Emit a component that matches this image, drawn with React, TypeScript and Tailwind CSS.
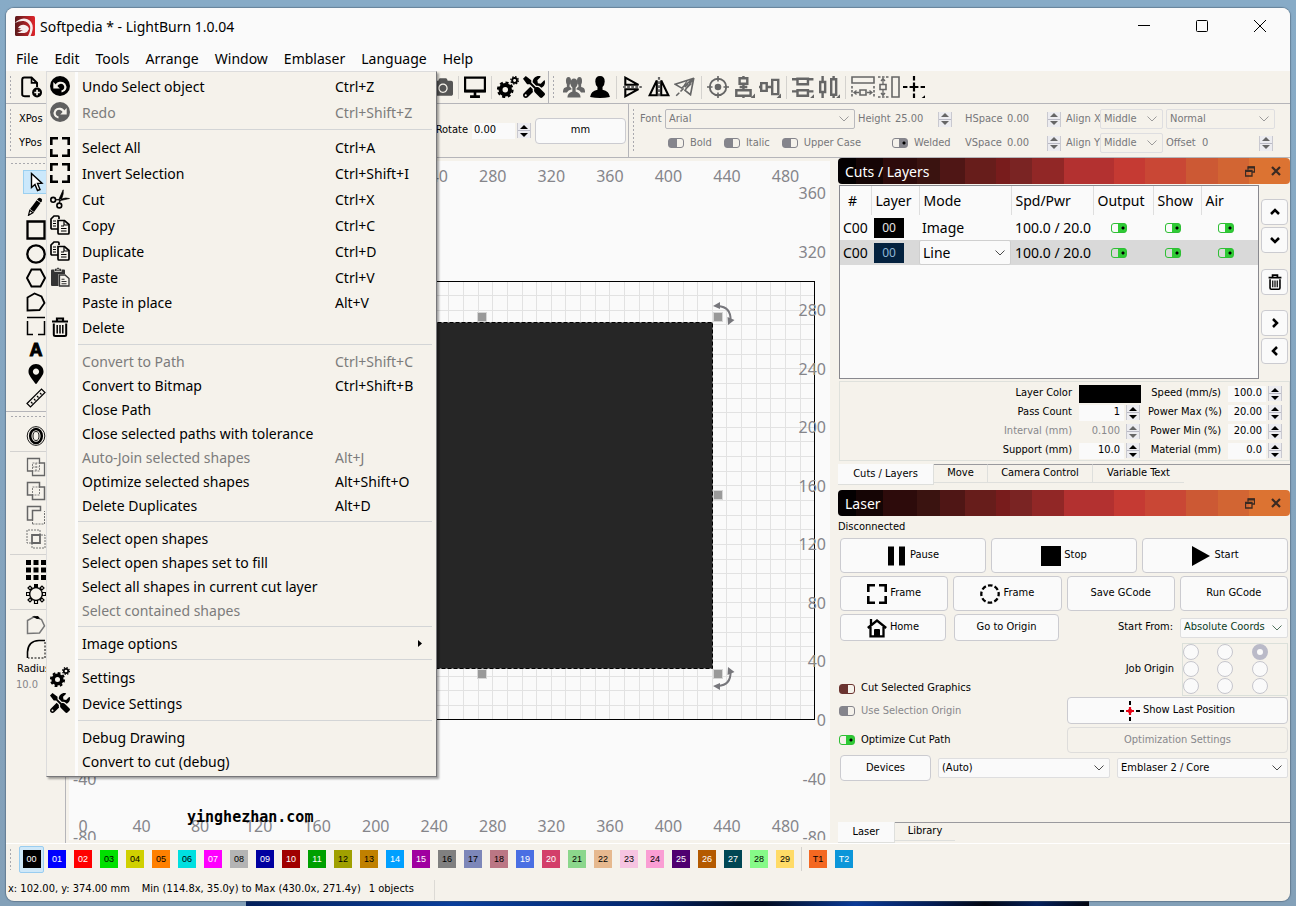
import React from "react";
import { FaCamera, FaMapMarkerAlt, FaTools } from "react-icons/fa";

type Kids = { children?: React.ReactNode };

/* ---------- icons ---------- */

function Icon({ children, size = 20, className = "" }: Kids & { size?: number; className?: string }) {
  return (
    <svg
      width={size}
      height={size}
      viewBox="0 0 20 20"
      fill="none"
      stroke="currentColor"
      strokeWidth="2"
      aria-hidden="true"
      className={`block shrink-0 ${className}`}
    >
      {children}
    </svg>
  );
}

const UndoIcon = ({ className = "" }: { className?: string }) => (
  <Icon className={className}>
    <circle cx="10" cy="10" r="10" fill="currentColor" stroke="none" />
    <path d="M6 10.500C7 6.500 12 5.500 14.500 8.500c2 3 .5 6.500-3 7" stroke="#f5f2eb" strokeWidth="2.200" />
    <path d="M3.300 6v6.500h6.500z" fill="#f5f2eb" stroke="none" />
  </Icon>
);
const RedoIcon = () => <UndoIcon className="-scale-x-100" />;
const MarqueeIcon = () => (
  <Icon>
    <path d="M1.300 8V1.300H8M12 1.300h6.700V8M18.700 12v6.700H12M8 18.700H1.300V12" strokeWidth="2.600" />
  </Icon>
);
const CircleFrameIcon = () => (
  <Icon>
    <circle cx="10" cy="10" r="8.700" strokeWidth="2.300" strokeDasharray="4.600 2.230" strokeDashoffset="2.300" />
  </Icon>
);
const ScissorsIcon = () => (
  <Icon>
    <circle cx="3.200" cy="10.800" r="2.400" strokeWidth="1.600" />
    <circle cx="9.300" cy="16.500" r="2.400" strokeWidth="1.600" />
    <path d="M5.500 10.800l6 .5L19.500 9.500q-4-1-7 .2zM9.300 14l.2-5L13.200 .8q.5 4-1 7.500l-2 4z" fill="currentColor" strokeWidth="0.700" />
  </Icon>
);
const CopyIcon = () => (
  <Icon>
    <path d="M8 14H2Q1 14 1 13V4l3-3h4q1 0 1 1v2M8 16V5.500h6.500l4.500 4V18q0 1-1 1H9q-1 0-1-1z" strokeWidth="1.700" />
    <path d="M3 6h3M3 8.500h3M3 11h3M11 11h3M11 13.500h5.500M11 16h5.500M14 6v4h4" strokeWidth="1.200" />
  </Icon>
);
const PasteIcon = () => (
  <Icon className="text-[#333]">
    <path d="M1 3.500Q1 2.500 2 2.500h2.500V5h7V2.500H14q1 0 1 1V7H8.500v12H2q-1 0-1-1z" fill="currentColor" stroke="none" />
    <path d="M5.500 3.800V2.300h1.500Q8-.3 9 2.300h1.500v1.500z" strokeWidth="1.100" />
    <path d="M9.500 8H15l4 3.500V19H9.500z" strokeWidth="1.300" />
    <path d="M11.500 12.300h3M11.500 14.500h5M11.500 16.700h5" strokeWidth="1.100" />
  </Icon>
);
const TrashIcon = ({ size = 20 }: { size?: number }) => (
  <Icon size={size}>
    <path d="M2 4.500h16M7 4V1.500h6V4" strokeWidth="2.200" />
    <path d="M3.800 6.500v11q0 1.500 1.500 1.500h9.400q1.500 0 1.500-1.500v-11" strokeWidth="2" />
    <path d="M7.200 8v8.500M10 8v8.500M12.800 8v8.500" strokeWidth="1.500" />
  </Icon>
);
const GearsIcon = ({ size = 22 }: { size?: number }) => (
  <Icon size={size}>
    <circle cx="7.500" cy="12.500" r="4.300" strokeWidth="3.600" />
    <circle cx="7.500" cy="12.500" r="6.600" strokeWidth="2" strokeDasharray="2.800 2.384" />
    <circle cx="16" cy="4" r="2.200" strokeWidth="1.700" />
    <circle cx="16" cy="4" r="3.400" strokeWidth="1.200" strokeDasharray="1.400 1.270" />
  </Icon>
);
const NewFileIcon = () => (
  <Icon size={22}>
    <path d="M9 18.500H4.500Q2 18.500 2 16.500V3.500Q2 1.300 4 1.300h6.500l5 5V10" strokeWidth="1.800" />
    <path d="M10.500 1.300v5h5" strokeWidth="1.500" />
    <circle cx="15.500" cy="15" r="4.500" fill="currentColor" stroke="none" />
    <path d="M13 15h5M15.500 12.500v5" stroke="#f5f2eb" strokeWidth="1.500" />
  </Icon>
);
const MonitorIcon = () => (
  <Icon size={22}>
    <path d="M1 1.500h18v12.500H1z" strokeWidth="2" />
    <path d="M1 13.500h18M10 14v4M5.500 18.800h9" strokeWidth="2.400" />
  </Icon>
);
const UsersIcon = () => (
  <Icon size={22} className="text-[#666]">
    <g fill="currentColor" stroke="none">
      <ellipse cx="10" cy="6.500" rx="3.300" ry="4.300" />
      <path d="M4 19.500q0-4 4.500-5.500V10h3v4Q16 15.500 16 19.500z" />
      <ellipse cx="5" cy="4.500" rx="2.300" ry="3.500" />
      <ellipse cx="15" cy="4.500" rx="2.300" ry="3.500" />
      <path d="M0 14q0-3.500 3.500-4V7h2.500v3q1.500.5 2 2-3.500 1-4.500 3H0zM20 14q0-3.500-3.500-4V7h-2.500v3q-1.500.5-2 2 3.500 1 4.500 3H20z" />
    </g>
  </Icon>
);
const PersonIcon = () => (
  <Icon size={22}>
    <path d="M10 0q4.300 0 4.300 5 0 3-2 5v2.500q6.200 1.500 6.700 6.500Q10 21 1 19q.5-5 6.700-6.500V10q-2-2-2-5Q5.700 0 10 0z" fill="currentColor" stroke="none" />
  </Icon>
);
const FlipVIcon = () => (
  <Icon size={22}>
    <path d="M3 1.500V8h12zM3 18.500V12h12z" strokeWidth="1.900" />
    <path d="M1 10h17" strokeWidth="2" strokeDasharray="2.500 1.200" stroke="#666" />
  </Icon>
);
const FlipHIcon = () => (
  <Icon size={22}>
    <path d="M1.500 17.500H8V4zM18.500 17.500H12V4z" strokeWidth="1.900" />
    <path d="M10 1v18" strokeWidth="2" strokeDasharray="2.500 1.200" stroke="#666" />
  </Icon>
);
const MirrorIcon = () => (
  <Icon size={22} className="text-[#666]">
    <path d="M1 7.500L18 2 7 11zM18 2l-3 15-5-4z" strokeWidth="1.500" />
    <path d="M2 18L18 2" strokeWidth="1.400" strokeDasharray="4 1.500" />
    <path d="M12 4.200L9 9M16 7l-4 3.500" strokeWidth="1" />
  </Icon>
);
const TargetIcon = () => (
  <Icon size={22} className="text-[#666]">
    <circle cx="10" cy="10" r="7.500" strokeWidth="1.700" />
    <circle cx="10" cy="10" r="3" fill="currentColor" stroke="none" />
    <path d="M10 0v5M10 15v5M0 10h5M15 10h5" strokeWidth="1.500" />
  </Icon>
);
const AlignVIcon = () => (
  <Icon size={22} className="text-[#666]">
    <path d="M6 2h7v5H6zM3 13h13v5H3zM9.500 0v2M9.500 7v6M9.500 18v2M6 10h7" strokeWidth="2.200" />
    <path d="M20 16v4h-4z" fill="currentColor" stroke="none" />
  </Icon>
);
const AlignHIcon = () => (
  <Icon size={22} className="text-[#666]">
    <path d="M2 6.500h5v7H2zM12 3.500h5.500v13H12zM0 10h2M7 10h5" strokeWidth="2.200" />
    <path d="M20 16v4h-4z" fill="currentColor" stroke="none" />
  </Icon>
);
const DistVIcon = () => (
  <Icon size={22} className="text-[#666]">
    <path d="M5 2.500h9.500v5H5zM5 13h9.500v5H5zM0 3h5M15 3h4.500M0 14h5M15 14h4.500" strokeWidth="2.200" />
    <path d="M20 16.500V20h-3.500z" fill="currentColor" stroke="none" />
  </Icon>
);
const DistHIcon = () => (
  <Icon size={22} className="text-[#666]">
    <path d="M2 5.500h4.500v9H2zM12 3h4.500v14H12zM4.200 0v5.500M4.200 14.500V20M14.200 0v3M14.200 17v3" strokeWidth="2.200" />
    <path d="M20 16.500V20h-3.500z" fill="currentColor" stroke="none" />
  </Icon>
);
const SameWidthIcon = () => (
  <svg width="24" height="22" viewBox="0 0 24 22" fill="none" stroke="#666" strokeWidth="1.600" aria-hidden="true" className="block shrink-0">
    <path d="M1 1h22v6H1zM9 14h6v5H9z" />
    <path d="M1 10v11M23 10v11" strokeDasharray="2.500 1.500" />
    <path d="M3 16.500h5M16 16.500h5M5.500 14.500l-2.500 2 2.500 2M18.500 14.500l2.500 2-2.500 2" strokeWidth="1.300" />
  </svg>
);
const SameHeightIcon = () => (
  <svg width="24" height="22" viewBox="0 0 24 22" fill="none" stroke="#666" strokeWidth="1.600" aria-hidden="true" className="block shrink-0">
    <path d="M15 1h7v20h-7zM3 8.500h6v5H3z" />
    <path d="M1 1h11M1 21h11" strokeDasharray="2.500 1.500" />
    <path d="M6 2.500v6M6 13.500v6M4 5l2-2.500L8 5M4 17l2 2.500L8 17" strokeWidth="1.300" />
  </svg>
);
const MoveTargetIcon = () => (
  <Icon size={22}>
    <path d="M10 0v4M10 6v8M10 16v4M0 10h4M6 10h8M16 10h4" strokeWidth="2" />
    <path d="M20 17.500V20h-3z" fill="currentColor" stroke="none" />
  </Icon>
);
const LastPositionIcon = () => (
  <Icon size={20}>
    <path d="M10 0v4M10 16v4M0 10h4M16 10h4" />
    <path d="M10 6v8M6 10h8" stroke="#e60012" strokeWidth="2.200" />
    <circle cx="10" cy="10" r="2.200" fill="#e60012" stroke="none" />
  </Icon>
);
const HomeIcon = () => (
  <Icon size={20}>
    <path d="M.8 10L10 2.500l9.200 7.500M3.500 9v9.300h13V9M4 8V1" strokeWidth="2.300" />
    <path d="M7 18.500v-6.500q0-1 1-1h4q1 0 1 1v6.500z" fill="currentColor" stroke="none" />
  </Icon>
);
const PencilIcon = () => (
  <Icon>
    <path d="M4 13L12 2.500q1.200-1.500 3-.3t.8 3L8 16z" fill="currentColor" stroke="none" />
    <path d="M3.700 14.300l-1.200 5 4.500-2.600z" strokeWidth="1.200" />
    <path d="M10.800 4l4 2.800" stroke="#f5f2eb" strokeWidth="0.900" />
  </Icon>
);
const LogoIcon = () => (
  <svg width="20" height="20" viewBox="0 0 20 20" aria-hidden="true" className="block shrink-0">
    <defs>
      <linearGradient id="logo" x1="0" x2="1">
        <stop offset="0" stopColor="#5a1a1c" />
        <stop offset="1" stopColor="#e0262b" />
      </linearGradient>
    </defs>
    <rect width="20" height="20" rx="1.500" fill="url(#logo)" />
    <path d="M0 7Q3 3 9 2.500q6.500 0 8.500 6.500Q18.500 14 15.500 20H13Q16 14 15 10 13 5.500 8.500 5 4 4.700 0 7z" fill="#f6eeee" />
    <path d="M3 12Q5.500 8 10 9q3.500 1 4 4-1 3-4.500 4H2q4-1.500 6-3-3 .8-5-.3 2.500-.5 3-1.200-1.500-.5-3-.5z" fill="#f6eeee" />
  </svg>
);

/* ---------- small controls ---------- */

function Toggle({ id, tone, on = false, disabled = false }: { id: string; tone: "green" | "grey" | "brown"; on?: boolean; disabled?: boolean }) {
  const tones = {
    green:
      "border-[#2fbf35] bg-[radial-gradient(circle_at_11px_4px,#000_0,#000_1px,transparent_2px),linear-gradient(90deg,transparent_45%,#2fcb35_45%)]",
    grey: on
      ? "border-[#85858c] bg-[radial-gradient(circle_at_11px_4px,#000_0,#000_1px,transparent_2px),linear-gradient(90deg,transparent_45%,#85858c_45%)]"
      : "border-[#85858c] bg-[linear-gradient(90deg,#85858c_55%,transparent_55%)]",
    brown: "border-[#6b3430] bg-[linear-gradient(90deg,#6b3430_55%,transparent_55%)]",
  };
  return (
    <input
      id={id}
      type="checkbox"
      aria-label={id}
      defaultChecked={on}
      disabled={disabled}
      className={`block h-[10px] w-4 shrink-0 appearance-none rounded-[3px] border ${tones[tone]}`}
    />
  );
}

function Spinner({ name, disabled = false }: { name: string; disabled?: boolean }) {
  return (
    <span className={`flex h-[15px] w-[14px] shrink-0 flex-col border-x border-[#c9c9d0] bg-[#ececf0] ${disabled ? "text-[#666]" : "text-black"}`}>
      <button type="button" aria-label={`${name} up`} className="flex flex-1 items-center justify-center border-b border-[#b9b9c4]">
        <svg width="8" height="4" viewBox="0 0 8 4" fill="currentColor"><path d="M0 4L4 0l4 4z" /></svg>
      </button>
      <button type="button" aria-label={`${name} down`} className="flex flex-1 items-center justify-center">
        <svg width="8" height="4" viewBox="0 0 8 4" fill="currentColor"><path d="M0 0l4 4 4-4z" /></svg>
      </button>
    </span>
  );
}

function Select({ id, value, className, label }: { id: string; value: string; className: string; label?: string }) {
  return (
    <span className={`relative flex shrink-0 items-center rounded-[2px] border ${className}`}>
      <select id={id} aria-label={label} defaultValue={value} className="h-full w-full appearance-none bg-transparent pl-[3px] outline-none">
        <option>{value}</option>
      </select>
      <svg width="10" height="6" viewBox="0 0 10 6" fill="none" stroke="currentColor" className="pointer-events-none absolute right-[5px] opacity-70">
        <path d="M.5.5L5 5 9.500.5" />
      </svg>
    </span>
  );
}

function Button({ children, className = "" }: Kids & { className?: string }) {
  return (
    <button type="button" className={`flex items-center justify-center gap-[3px] rounded-[4px] border border-[#cbcbd0] bg-[#fafafa] ${className}`}>
      {children}
    </button>
  );
}

const GripV = ({ className = "" }: { className?: string }) => (
  <span className={`w-[3px] shrink-0 self-stretch bg-[radial-gradient(circle,#a9a9ae_1px,transparent_1px)] bg-[size:3px_4px] ${className}`} />
);
const GripH = () => <span className="block h-[3px] bg-[radial-gradient(circle,#a9a9ae_1px,transparent_1px)] bg-[size:4px_3px]" />;
const Bar = () => <span className="mx-px h-[23px] w-px shrink-0 bg-[#d4d2ce]" />;

function Tool({ name, children }: Kids & { name: string }) {
  return (
    <button type="button" aria-label={name} className="flex shrink-0 items-center justify-center">
      {children}
    </button>
  );
}

/* ---------- edit menu ---------- */

type Item = { label: string; keys?: string; icon?: React.ReactNode; off?: boolean; tall?: boolean; sub?: boolean };

const groups: Item[][] = [
  [
    { label: "Undo Select object", keys: "Ctrl+Z", icon: <UndoIcon />, tall: true },
    { label: "Redo", keys: "Ctrl+Shift+Z", icon: <RedoIcon />, off: true, tall: true },
  ],
  [
    { label: "Select All", keys: "Ctrl+A", icon: <MarqueeIcon />, tall: true },
    { label: "Invert Selection", keys: "Ctrl+Shift+I", icon: <MarqueeIcon />, tall: true },
    { label: "Cut", keys: "Ctrl+X", icon: <ScissorsIcon />, tall: true },
    { label: "Copy", keys: "Ctrl+C", icon: <CopyIcon />, tall: true },
    { label: "Duplicate", keys: "Ctrl+D", icon: <CopyIcon />, tall: true },
    { label: "Paste", keys: "Ctrl+V", icon: <PasteIcon />, tall: true },
    { label: "Paste in place", keys: "Alt+V" },
    { label: "Delete", icon: <TrashIcon />, tall: true },
  ],
  [
    { label: "Convert to Path", keys: "Ctrl+Shift+C", off: true },
    { label: "Convert to Bitmap", keys: "Ctrl+Shift+B" },
    { label: "Close Path" },
    { label: "Close selected paths with tolerance" },
    { label: "Auto-Join selected shapes", keys: "Alt+J", off: true },
    { label: "Optimize selected shapes", keys: "Alt+Shift+O" },
    { label: "Delete Duplicates", keys: "Alt+D" },
  ],
  [
    { label: "Select open shapes" },
    { label: "Select open shapes set to fill" },
    { label: "Select all shapes in current cut layer" },
    { label: "Select contained shapes", off: true },
  ],
  [{ label: "Image options", sub: true }],
  [
    { label: "Settings", icon: <GearsIcon size={20} />, tall: true },
    { label: "Device Settings", icon: <FaTools size={20} />, tall: true },
  ],
  [{ label: "Debug Drawing" }, { label: "Convert to cut (debug)" }],
];

function EditMenu() {
  return (
    <div
      role="menu"
      aria-label="Edit"
      className="absolute left-[40px] top-[63px] z-20 w-[391px] border border-[#dcdcdc] border-b-[#77777a] border-r-[#77777a] bg-[linear-gradient(90deg,#f5f2eb_28px,#fcfcfc_28px,#fcfcfc_31px,#f5f2eb_31px)] pb-[3px] pt-px text-[14px] shadow-[2px_2px_2px_rgba(0,0,0,0.35)]"
    >
      {groups.map((group, g) => (
        <div key={g} role="group">
          {g > 0 && (
            <div className="h-[9px] pt-1">
              <div className="ml-[31px] mr-1 h-px bg-[#d3d5d6]" />
            </div>
          )}
          {group.map((item) => (
            <button
              key={item.label}
              type="button"
              role="menuitem"
              className={`flex w-full items-center text-left ${item.tall ? "h-[26px]" : "h-6"} ${item.off ? "text-[#7c7c7c]" : "text-black"}`}
            >
              <span className={`flex w-[35px] shrink-0 pl-[3px] ${item.off ? "text-[#5f5f5f]" : ""}`}>{item.icon}</span>
              <span className="w-[253px] shrink-0">{item.label}</span>
              <span className="flex-1">{item.keys}</span>
              {item.sub && (
                <svg width="4" height="7" viewBox="0 0 4 7" className="mr-[14px]"><path d="M0 0l4 3.500L0 7z" /></svg>
              )}
            </button>
          ))}
        </div>
      ))}
    </div>
  );
}

/* ---------- toolbars ---------- */

function MainToolbar() {
  return (
    <div className="flex h-[33px] items-center border-b border-[#b5b5b9]">
      <div className="flex w-[543px] items-center justify-between self-stretch border-r border-[#b5b5b9] pl-[3px] pr-[3px]">
        <div className="flex items-center gap-2 self-stretch">
          <GripV className="my-1" />
          <Tool name="New"><NewFileIcon /></Tool>
        </div>
        <div className="flex items-center gap-1">
          <Tool name="Camera"><FaCamera size={20} color="#555" /></Tool>
          <Bar />
          <Tool name="Preview"><MonitorIcon /></Tool>
          <Bar />
          <Tool name="Settings"><GearsIcon /></Tool>
          <Tool name="Device settings"><FaTools size={22} /></Tool>
        </div>
      </div>
      <div className="flex items-center gap-1 self-stretch pl-[3px]">
        <GripV className="my-1 mr-1" />
        <Tool name="Group"><UsersIcon /></Tool>
        <Tool name="Ungroup"><PersonIcon /></Tool>
        <Bar />
        <Tool name="Flip vertical"><FlipVIcon /></Tool>
        <Tool name="Flip horizontal"><FlipHIcon /></Tool>
        <Tool name="Mirror"><MirrorIcon /></Tool>
        <Bar />
        <Tool name="Center"><TargetIcon /></Tool>
        <Tool name="Align vertical"><AlignVIcon /></Tool>
        <Tool name="Align horizontal"><AlignHIcon /></Tool>
        <Bar />
        <Tool name="Distribute vertical"><DistVIcon /></Tool>
        <Tool name="Distribute horizontal"><DistHIcon /></Tool>
        <Bar />
        <div className="flex gap-[2px]">
          <Tool name="Same width"><SameWidthIcon /></Tool>
          <Tool name="Same height"><SameHeightIcon /></Tool>
          <Tool name="Move to position"><MoveTargetIcon /></Tool>
        </div>
      </div>
    </div>
  );
}

const numberField = "min-w-0 bg-transparent outline-none";

function TextToolbar() {
  return (
    <div className="grid flex-1 grid-cols-[218px_107px_101px_100px_1fr] content-center gap-y-1 pl-[5px] pt-px text-[#77777a]">
      <div className="flex h-5 items-center">
        <label htmlFor="font" className="w-[25px]">Font</label>
        <Select id="font" value="Arial" className="h-5 w-[190px] border-[#b9b9bd]" />
      </div>
      <div className="flex h-5 items-center">
        <label htmlFor="height" className="w-[37px]">Height</label>
        <input id="height" defaultValue="25.00" className={`${numberField} w-[43px]`} />
        <Spinner name="Height" disabled />
      </div>
      <div className="flex h-5 items-center">
        <label htmlFor="hspace" className="w-[42px]">HSpace</label>
        <input id="hspace" defaultValue="0.00" className={`${numberField} w-10`} />
        <Spinner name="HSpace" disabled />
      </div>
      <div className="flex h-5 items-center">
        <label htmlFor="alignx" className="w-[34px] whitespace-nowrap">Align X</label>
        <Select id="alignx" value="Middle" className="h-5 w-[63px] border-[#dedee0]" />
      </div>
      <div className="flex h-5 items-center">
        <Select id="mode" label="Text mode" value="Normal" className="h-5 w-[109px] border-[#dedee0]" />
      </div>
      <div className="flex h-5 items-center gap-3 pl-7">
        <span className="flex items-center gap-[6px]"><Toggle id="bold" tone="grey" disabled /><label htmlFor="bold">Bold</label></span>
        <span className="flex items-center gap-[6px]"><Toggle id="italic" tone="grey" disabled /><label htmlFor="italic">Italic</label></span>
        <span className="flex items-center gap-[6px] whitespace-nowrap"><Toggle id="upper" tone="grey" disabled /><label htmlFor="upper">Upper Case</label></span>
      </div>
      <div className="flex h-5 items-center gap-[6px] pl-[34px]">
        <Toggle id="welded" tone="grey" on disabled />
        <label htmlFor="welded">Welded</label>
      </div>
      <div className="flex h-5 items-center">
        <label htmlFor="vspace" className="w-[42px]">VSpace</label>
        <input id="vspace" defaultValue="0.00" className={`${numberField} w-10`} />
        <Spinner name="VSpace" disabled />
      </div>
      <div className="flex h-5 items-center">
        <label htmlFor="aligny" className="w-[34px] whitespace-nowrap">Align Y</label>
        <Select id="aligny" value="Middle" className="h-5 w-[63px] border-[#dedee0]" />
      </div>
      <div className="flex h-5 items-center">
        <label htmlFor="offset" className="w-9">Offset</label>
        <input id="offset" defaultValue="0" className={`${numberField} w-[57px]`} />
        <Spinner name="Offset" disabled />
      </div>
    </div>
  );
}

function PropertyToolbar() {
  return (
    <div className="flex h-[54px] border-b border-[#b5b5b9] font-['DejaVu_Sans_Condensed','Noto_Sans',sans-serif] text-[11px]">
      <div className="flex w-[623px] shrink-0 border-r border-[#b5b5b9] pl-[3px]">
        <GripV className="my-1" />
        <div className="ml-[7px] flex flex-col justify-center gap-2 pt-px leading-4">
          <span>XPos</span>
          <span>YPos</span>
        </div>
        <div className="ml-auto flex items-center pr-[2px]">
          <label htmlFor="rotate">Rotate</label>
          <input id="rotate" defaultValue="0.00" className="ml-1 mr-[2px] h-4 w-[43px] bg-[#fafafa] pl-[2px] outline-none" />
          <Spinner name="Rotate" />
          <Button className="ml-1 h-[26px] w-[91px]">mm</Button>
        </div>
      </div>
      <div className="flex flex-1 pl-[3px]">
        <GripV className="my-1" />
        <TextToolbar />
      </div>
    </div>
  );
}

/* ---------- left tool column ---------- */

function ToolRow({ name, children, active = false }: Kids & { name: string; active?: boolean }) {
  return (
    <button
      type="button"
      aria-label={name}
      className={`ml-[17px] flex h-6 w-[26px] items-center justify-center ${active ? "border border-[#9bd0f0] bg-[#cbe8fb]" : ""}`}
    >
      {children}
    </button>
  );
}

const Rule = () => <div className="my-[3px] ml-[4px] h-px bg-[#d3d2d0]" />;

function ToolColumn() {
  return (
    <div className="flex w-[60px] shrink-0 flex-col border-r border-[#b5b5b9]">
      <div className="h-3 pl-1 pt-1"><GripH /></div>
      <ToolRow name="Select" active>
        <Icon><path d="M5.500 1.500v14l3.500-3 2.500 6 2.500-1-2.500-6 4.500-.3z" fill="#fff" strokeWidth="1.400" /></Icon>
      </ToolRow>
      <ToolRow name="Draw lines"><PencilIcon /></ToolRow>
      <ToolRow name="Rectangle"><Icon><path d="M1.500 1.500h17v17h-17z" strokeWidth="2.300" /></Icon></ToolRow>
      <ToolRow name="Ellipse"><Icon><circle cx="10" cy="10" r="8.700" strokeWidth="2.300" /></Icon></ToolRow>
      <ToolRow name="Polygon"><Icon><path d="M1 10l4.500-8.500h9L19 10l-4.500 8.500h-9z" strokeWidth="1.900" /></Icon></ToolRow>
      <ToolRow name="Edit nodes"><Icon><path d="M1.500 18.500V5.500l7-4 7 3L18.500 11l-5 7z" strokeWidth="1.800" /></Icon></ToolRow>
      <ToolRow name="Trim"><Icon><path d="M1 1.500h18M1.500 5v13.500H7M12 18.500h6.500V5" strokeWidth="1.500" /></Icon></ToolRow>
      <ToolRow name="Text"><span className="font-['Liberation_Sans',sans-serif] text-[18px] font-bold leading-6 [-webkit-text-stroke:1px_#000]">A</span></ToolRow>
      <ToolRow name="Position laser"><FaMapMarkerAlt size={20} /></ToolRow>
      <ToolRow name="Measure">
        <Icon><path d="M1 15.500L15.500 1l3.500 3.500L4.500 19zM5 14l1.500 1.500M8 11l1.500 1.500M11 8l1.500 1.500M14 5l1.500 1.500" strokeWidth="1.200" /></Icon>
      </ToolRow>
      <div className="mt-px h-px bg-[#b5b5b9]" />
      <div className="h-3 pl-1 pt-[3px]"><GripH /></div>
      <ToolRow name="Offset shapes">
        <Icon><ellipse cx="10" cy="10" rx="5.800" ry="7" strokeWidth="2.500" /><ellipse cx="10" cy="10" rx="8.800" ry="9.400" strokeWidth="0.900" /><ellipse cx="10" cy="10" rx="3" ry="4.500" strokeWidth="0.900" /></Icon>
      </ToolRow>
      <Rule />
      <ToolRow name="Weld"><Icon className="text-[#666]"><path d="M1.500 1.500h12V6h5v12.500h-12V14h-5z" strokeWidth="1.300" /><path d="M6.500 6h7v8h-7zM6.500 10h7M10 6v8" strokeWidth="0.800" strokeDasharray="2 1" /></Icon></ToolRow>
      <ToolRow name="Boolean union"><Icon className="text-[#666]"><path d="M1.500 1.500h12V6h5v12.500h-12V14h-5z" strokeWidth="1.500" /><path d="M6.500 6h7v8h-7z" strokeWidth="0.800" strokeDasharray="2 1" /></Icon></ToolRow>
      <ToolRow name="Boolean subtract"><Icon className="text-[#666]"><path d="M1.500 1.500h13v4h-8v9.500h-5z" strokeWidth="1.500" /><path d="M6.500 19V15M6.500 19h12V6" strokeWidth="0.900" strokeDasharray="2 1" /></Icon></ToolRow>
      <ToolRow name="Boolean intersection"><Icon className="text-[#666]"><path d="M6 6h8v8H6z" strokeWidth="1.800" /><path d="M14 6V1H1v13h5M6 14v5h13V6h-5" strokeWidth="0.900" strokeDasharray="2 1" /></Icon></ToolRow>
      <Rule />
      <ToolRow name="Grid array">
        <Icon><path d="M0 2.500h20M0 10h20M0 17.500h20" strokeWidth="5" strokeDasharray="5 2.500" /></Icon>
      </ToolRow>
      <ToolRow name="Circular array">
        <Icon>
          <circle cx="10" cy="10" r="6.300" strokeWidth="1.200" />
          <path d="M8 0h4v4H8z" fill="currentColor" stroke="none" />
          <g fill="#f5f2eb" strokeWidth="1.200">
            <path d="M14 4l2-2 2 2-2 2zM16.500 8.500h3v3h-3zM14 16l2-2 2 2-2 2zM8.500 16.500h3v3h-3zM2 16l2-2 2 2-2 2zM.5 8.500h3v3h-3zM2 4l2-2 2 2-2 2z" />
          </g>
        </Icon>
      </ToolRow>
      <Rule />
      <ToolRow name="Start point"><Icon><path d="M1.500 18.500V5.500l7-4 7 3L18.500 11l-5 7z" stroke="#777" strokeWidth="1.500" /><path d="M6 1.500l6-.5 2 2.500-3 .5z" fill="#000" stroke="none" /></Icon></ToolRow>
      <ToolRow name="Corner radius"><Icon><path d="M1.500 19V13Q2 2 13 1.500h6" strokeWidth="1.600" /><path d="M19 3v16H2" strokeWidth="1" strokeDasharray="2 1.500" /></Icon></ToolRow>
      <label htmlFor="radius" className="pl-[11px] font-['DejaVu_Sans_Condensed','Noto_Sans',sans-serif] text-[11px] leading-4">Radius</label>
      <input id="radius" defaultValue="10.0" className="ml-[10px] h-4 w-10 bg-transparent font-['DejaVu_Sans_Condensed','Noto_Sans',sans-serif] text-[11px] text-[#85858a] outline-none" />
    </div>
  );
}

/* ---------- work area ---------- */

const unit = 1.4636;
const gx = (v: number) => 83 + v * unit;
const gy = (v: number) => 720 - v * unit;

function Workspace() {
  const xs = Array.from({ length: 49 }, (_, i) => (i + 1) * 10);
  const ys = Array.from({ length: 29 }, (_, i) => (i + 1) * 10);
  const xLabels = Array.from({ length: 13 }, (_, i) => i * 40);
  const yLabels = Array.from({ length: 12 }, (_, i) => i * 40 - 80);
  return (
    <div className="relative mb-[3px] ml-[3px] mr-2 mt-[3px] min-w-0 flex-1 overflow-hidden bg-[#fafafa]">
      <svg viewBox="69 161 761 679" className="absolute left-0 top-0 h-[679px] w-[761px]" role="img" aria-label="Work area">
        <g stroke="#e2e2e2" shapeRendering="crispEdges">
          {xs.map((v) => <line key={v} x1={gx(v)} x2={gx(v)} y1={gy(300)} y2={gy(0)} />)}
          {ys.map((v) => <line key={v} x1={gx(0)} x2={gx(500)} y1={gy(v)} y2={gy(v)} />)}
        </g>
        <rect x="83.500" y="281.500" width="731" height="438" fill="none" stroke="#000" />
        <rect x="251.500" y="322.500" width="461" height="346" fill="#262626" stroke="#000" strokeDasharray="4 2" />
        <g fill="#999" stroke="#d6d6d6">
          {[[482, 317], [718, 317], [718, 495], [482, 674], [718, 674]].map(([x, y]) => (
            <rect key={`${x}-${y}`} x={x - 4.5} y={y - 4.5} width="9" height="9" />
          ))}
        </g>
        <g fill="none" stroke="#77777c" strokeWidth="2">
          <path d="M718 306q13 1 12.500 14" />
          <path d="M718 686q13-1 12.500-14" />
        </g>
        <path d="M713 306l7-4v7zM728 325l-.5-8 7 3zM713 686l7 4v-7zM728 667l-.5 8 7-3z" fill="#77777c" />
        <g fill="#85858a" fontFamily='"Noto Sans", sans-serif' fontSize="16">
          {xLabels.map((v) => (
            <React.Fragment key={v}>
              <text x={gx(v)} y="182" textAnchor="middle">{v}</text>
              <text x={gx(v)} y="832" textAnchor="middle">{v}</text>
            </React.Fragment>
          ))}
          {yLabels.map((v) => <text key={v} x="826" y={gy(v) + 6} textAnchor="end">{v}</text>)}
          {[-40, -80].map((v) => <text key={v} x="73" y={gy(v) + 6}>{v}</text>)}
        </g>
        <text x="187" y="822" fontFamily='"DejaVu Sans Mono", monospace' fontSize="15" fontWeight="bold" fill="#000">yinghezhan.com</text>
      </svg>
    </div>
  );
}

/* ---------- right docks ---------- */

function DockHeader({ title }: { title: string }) {
  return (
    <div className="flex h-[26px] shrink-0 items-center rounded-[4px] bg-[linear-gradient(90deg,#030001_4%,#150505_4%_10%,#2d0b0b_10%_17.500%,#3a1310_17.500%_22.500%,#4f1615_22.500%_28%,#671d1b_28%_35%,#781c1c_35%_38%,#7a2423_38%_43%,#912726_43%_50%,#b33130_50%_61%,#c53a33_61%_68%,#c94735_68%_77%,#cc5934_77%_84%,#d26533_84%_91%,#dc7332_91%)] pl-[7px] pr-[9px]">
      <h2 className="text-[14px] text-white">{title}</h2>
      <button type="button" aria-label={`Float ${title}`} className="ml-auto">
        <svg width="10" height="11" viewBox="0 0 10 11" fill="none" stroke="#3a2a22" className="block"><path d="M3 3.500V1h6.500v5H7M.5 4.500H7V10H.5z" strokeWidth="1.300" /><path d="M3 1.500h6.500M.5 5H7" strokeWidth="2" /></svg>
      </button>
      <button type="button" aria-label={`Close ${title}`} className="ml-4">
        <svg width="10" height="10" viewBox="0 0 10 10" fill="none" stroke="#3a2a22" strokeWidth="2.200" className="block"><path d="M1 1l8 8M9 1L1 9" /></svg>
      </button>
    </div>
  );
}

function Tabs({ tabs }: { tabs: { name: string; width: string }[] }) {
  return (
    <div role="tablist" className="flex h-[21px] shrink-0 items-start text-[11px]">
      {tabs.map((t, i) => (
        <button
          key={t.name}
          type="button"
          role="tab"
          aria-selected={i === 0}
          className={`whitespace-nowrap ${t.width} ${i === 0 ? "h-[21px] border-b border-r border-[#dedfdc] bg-[#fafafa]" : "h-[19px] border-b border-r border-t border-[#dedfdc] border-t-[#9a9a9e] last-of-type:border-r-0"}`}
        >
          {t.name}
        </button>
      ))}
      <span className="h-px flex-1 bg-[#9a9a9e]" />
    </div>
  );
}

const sideButton = "h-[26px] w-[27px]";

function Chevron({ d }: { d: string }) {
  return (
    <svg width="10" height="10" viewBox="0 0 10 10" fill="none" stroke="#000" strokeWidth="2.500"><path d={d} /></svg>
  );
}

function LayerTable() {
  return (
    <div className="mt-px flex">
      <div className="ml-px h-[194px] flex-1 border border-[#88888e] bg-[#fafafa]">
        <table className="w-full table-fixed border-collapse font-['Noto_Sans',sans-serif] text-[14px]">
          <thead>
            <tr className="h-[29px] text-left">
              <th className="w-[31px] border-r border-[#dedede] p-0 pl-2 font-normal">#</th>
              <th className="w-12 border-r border-[#dedede] p-0 pl-1 font-normal">Layer</th>
              <th className="w-[92px] border-r border-[#dedede] p-0 pl-1 font-normal">Mode</th>
              <th className="w-[82px] border-r border-[#dedede] p-0 pl-1 font-normal">Spd/Pwr</th>
              <th className="w-[60px] border-r border-[#dedede] p-0 pl-1 font-normal">Output</th>
              <th className="w-12 border-r border-[#dedede] p-0 pl-1 font-normal">Show</th>
              <th className="p-0 pl-1 font-normal">Air</th>
            </tr>
          </thead>
          <tbody>
            {["Image", "Line"].map((mode, i) => (
              <tr key={mode} className={`h-[25px] ${i ? "bg-[#d9d9d9]" : ""}`}>
                <td className="p-0 pl-[3px]">C00</td>
                <td className="p-0 pl-[3px]">
                  <span className={`flex h-5 w-[30px] items-center justify-center text-[12px] ${i ? "bg-[#04223f] text-[#8fb6d6]" : "bg-black text-[#e6e6e6]"}`}>00</span>
                </td>
                <td className="p-0">
                  {i ? (
                    <Select id="layer-mode" label="Layer mode" value="Line" className="h-[25px] border-[#cfcfcf] bg-[#fafafa]" />
                  ) : (
                    <span className="pl-[3px]">{mode}</span>
                  )}
                </td>
                <td className="whitespace-nowrap p-0 pl-1">100.0 / 20.0</td>
                <td className="p-0 pl-[18px]"><Toggle id={`output ${i}`} tone="green" on /></td>
                <td className="p-0 pl-3"><Toggle id={`show ${i}`} tone="green" on /></td>
                <td className="p-0 pl-[17px]"><Toggle id={`air ${i}`} tone="green" on /></td>
              </tr>
            ))}
          </tbody>
        </table>
      </div>
      <div className="flex flex-col gap-[2px] px-[2px] pt-[14px]">
        <Button className={sideButton}><Chevron d="M1 7l4-4 4 4" /></Button>
        <Button className={sideButton}><Chevron d="M1 3l4 4 4-4" /></Button>
        <Button className={`mt-[14px] ${sideButton}`}><TrashIcon size={16} /></Button>
        <Button className={`mt-[13px] ${sideButton}`}><Chevron d="M3 1l4 4-4 4" /></Button>
        <Button className={sideButton}><Chevron d="M7 1L3 5l4 4" /></Button>
      </div>
    </div>
  );
}

function Field({ label, value, off = false, width }: { label: string; value: string; off?: boolean; width: string }) {
  return (
    <>
      <label htmlFor={label} className={`whitespace-nowrap text-right ${off ? "text-[#88888c]" : ""}`}>{label}</label>
      <span className="flex items-center gap-[2px]">
        <input
          id={label}
          defaultValue={value}
          disabled={off}
          className={`h-4 pr-1 text-right outline-none ${width} ${off ? "bg-transparent text-[#88888c]" : "bg-[#fafafa]"}`}
        />
        <Spinner name={label} disabled={off} />
      </span>
    </>
  );
}

function LayerSettings() {
  return (
    <div className="ml-px mt-[2px] grid h-[80px] grid-cols-[1fr_62px_73px_54px] content-end items-center gap-x-[7px] border border-[#dfe1dc] pr-[7px] text-[11px] [grid-auto-rows:19px]">
      <span className="text-right">Layer Color</span>
      <button type="button" aria-label="Layer color swatch" className="h-[18px] bg-black" />
      <Field label="Speed (mm/s)" value="100.0" width="w-[38px]" />
      <Field label="Pass Count" value="1" width="w-[45px]" />
      <Field label="Power Max (%)" value="20.00" width="w-[38px]" />
      <Field label="Interval (mm)" value="0.100" width="w-[45px]" off />
      <Field label="Power Min (%)" value="20.00" width="w-[38px]" />
      <Field label="Support (mm)" value="10.0" width="w-[45px]" />
      <Field label="Material (mm)" value="0.0" width="w-[38px]" />
    </div>
  );
}

function JobOrigin() {
  return (
    <fieldset className="grid h-[53px] w-[106px] grid-cols-[34px_35px_35px] border border-[#dbe0da]" aria-label="Job Origin">
      {Array.from({ length: 9 }, (_, i) => (
        <input
          key={i}
          type="radio"
          name="origin"
          aria-label={`Origin ${i + 1}`}
          defaultChecked={i === 2}
          className="h-4 w-4 appearance-none rounded-full border border-[#c6c6cd] bg-[#fafafa] checked:border-[5px] checked:border-[#babac8]"
        />
      ))}
    </fieldset>
  );
}

function LaserPanel() {
  return (
    <div className="flex flex-1 flex-col pr-[2px] text-[11px]">
      <p className="h-[22px] leading-[22px]">Disconnected</p>
      <div className="grid grid-cols-3 gap-[5px] pl-[2px]">
        <Button className="h-[35px]"><Icon><path d="M4 .5v19M15 .5v19" strokeWidth="6" /></Icon>Pause</Button>
        <Button className="h-[35px]"><Icon><path d="M0 0h20v20H0z" fill="currentColor" stroke="none" /></Icon>Stop</Button>
        <Button className="h-[35px]"><Icon><path d="M1 0L19 10 1 20z" fill="currentColor" stroke="none" /></Icon>Start</Button>
      </div>
      <div className="mt-[3px] grid grid-cols-4 gap-[5px] pl-[2px]">
        <Button className="h-[35px]"><MarqueeIcon />Frame</Button>
        <Button className="h-[35px]"><CircleFrameIcon />Frame</Button>
        <Button className="h-[35px]">Save GCode</Button>
        <Button className="h-[35px]">Run GCode</Button>
      </div>
      <div className="mt-[3px] flex h-[27px] items-center pl-[2px]">
        <Button className="h-[27px] w-[106px]"><HomeIcon />Home</Button>
        <Button className="ml-2 h-[27px] w-[105px]">Go to Origin</Button>
        <label htmlFor="start" className="ml-auto mr-[7px]">Start From:</label>
        <Select id="start" value="Absolute Coords" className="h-5 w-[108px] border-[#dededf] bg-[#fafafa] text-[#0b3a1c]" />
      </div>
      <div className="flex">
        <div className="flex flex-1 flex-col pl-px">
          <div className="mt-9 flex h-[23px] items-center gap-[6px]"><Toggle id="cut-selected" tone="brown" /><label htmlFor="cut-selected">Cut Selected Graphics</label></div>
          <div className="flex h-[22px] items-center gap-[6px] text-[#88888c]"><Toggle id="selection-origin" tone="grey" disabled /><label htmlFor="selection-origin">Use Selection Origin</label></div>
          <div className="mt-[7px] flex h-[22px] items-center gap-[6px]"><Toggle id="optimize" tone="green" on /><label htmlFor="optimize">Optimize Cut Path</label></div>
        </div>
        <div className="flex w-[221px] flex-col">
          <div className="mt-[2px] flex items-center justify-end gap-2"><span>Job Origin</span><JobOrigin /></div>
          <Button className="mt-px h-[27px]"><LastPositionIcon />Show Last Position</Button>
          <button type="button" disabled className="mt-[3px] h-[26px] rounded-[4px] border border-[#dedddb] text-[#88888c]">Optimization Settings</button>
        </div>
      </div>
      <div className="mt-[2px] flex items-center pl-[2px]">
        <Button className="h-[26px] w-[91px]">Devices</Button>
        <Select id="port" label="Port" value="(Auto)" className="ml-[7px] h-5 w-[172px] border-[#dededf] bg-[#fafafa]" />
        <Select id="device" label="Device" value="Emblaser 2 / Core" className="ml-auto h-5 w-[171px] border-[#dededf] bg-[#fafafa]" />
      </div>
    </div>
  );
}

/* ---------- palette ---------- */

const palette: [string, string, string][] = [
  ["00", "bg-black", "text-white"], ["01", "bg-[#0000ff]", "text-white"], ["02", "bg-[#ff0000]", "text-white"],
  ["03", "bg-[#00e000]", "text-black"], ["04", "bg-[#d0d000]", "text-black"], ["05", "bg-[#ff8000]", "text-black"],
  ["06", "bg-[#00e0e0]", "text-black"], ["07", "bg-[#ff00ff]", "text-white"], ["08", "bg-[#b4b4b4]", "text-black"],
  ["09", "bg-[#0000a0]", "text-white"], ["10", "bg-[#a00000]", "text-white"], ["11", "bg-[#00a000]", "text-white"],
  ["12", "bg-[#a0a000]", "text-black"], ["13", "bg-[#c08000]", "text-black"], ["14", "bg-[#00a0ff]", "text-white"],
  ["15", "bg-[#a000a0]", "text-white"], ["16", "bg-[#808080]", "text-black"], ["17", "bg-[#7d87b9]", "text-black"],
  ["18", "bg-[#bb7784]", "text-black"], ["19", "bg-[#4a6fe3]", "text-white"], ["20", "bg-[#d33f6a]", "text-white"],
  ["21", "bg-[#8cd78c]", "text-black"], ["22", "bg-[#e6b98f]", "text-black"], ["23", "bg-[#f6c4e1]", "text-black"],
  ["24", "bg-[#fa9ed4]", "text-black"], ["25", "bg-[#500070]", "text-white"], ["26", "bg-[#b45a00]", "text-white"],
  ["27", "bg-[#004754]", "text-white"], ["28", "bg-[#86fa88]", "text-black"], ["29", "bg-[#ffdb66]", "text-black"],
];

const swatch = "h-[18px] w-[18px] shrink-0 font-['Liberation_Sans',sans-serif] text-[9px] leading-[18px]";

function Palette() {
  return (
    <div className="flex h-[31px] items-center gap-2 border-t border-white pl-[3px]">
      <GripV className="my-1" />
      <div className="-mr-1 -ml-[1px] flex h-[27px] w-[25px] items-center justify-center rounded-[2px] border border-[#99cdf0] bg-[#cfe8f8]">
        <button type="button" className={`${swatch} ${palette[0][1]} ${palette[0][2]}`}>00</button>
      </div>
      {palette.slice(1).map(([name, bg, fg]) => (
        <button key={name} type="button" className={`${swatch} ${bg} ${fg}`}>{name}</button>
      ))}
      <span className="-mr-[1px] -ml-[1px] h-6 w-px bg-[#d4d2ce]" />
      <button type="button" className={`${swatch} bg-[#f46821] text-black`}>T1</button>
      <button type="button" className={`${swatch} bg-[#0c96d9] text-white`}>T2</button>
    </div>
  );
}

/* ---------- window ---------- */

const menus = ["File", "Edit", "Tools", "Arrange", "Window", "Emblaser", "Language", "Help"];

export default function App() {
  return (
    <div className="flex min-h-screen flex-col bg-[linear-gradient(90deg,transparent_19%,#04205c_19%,#0a3f9c_35%,#02266e_50%,#020b20_57%,#020b20_59%,#0a3a98_66%,#041c54_72%,#02050f_76%,#04205c_80%,#02050f_84%,transparent_84%),linear-gradient(#87abc7,#83a0b8)] bg-[size:100%_5px,100%_100%] bg-[position:left_bottom,left_top] bg-no-repeat px-[6px] pb-[5px] pt-2 font-['Noto_Sans',sans-serif] text-black">
      <div className="relative flex flex-1 flex-col overflow-hidden rounded-[8px] bg-[#f5f2eb] shadow-[0_0_1px_1px_rgba(70,90,110,0.5)]">
        <header className="flex h-9 items-center bg-[#fafafa] pl-[9px]">
          <LogoIcon />
          <h1 className="ml-[5px] text-[14px]">Softpedia * - LightBurn 1.0.04</h1>
          <div className="ml-auto flex items-center gap-[46px] pr-6">
            <button type="button" aria-label="Minimize"><svg width="12" height="12" viewBox="0 0 12 12" stroke="#000" className="block"><path d="M0 5.500h12" /></svg></button>
            <button type="button" aria-label="Maximize"><svg width="12" height="12" viewBox="0 0 12 12" fill="none" stroke="#000" className="block"><rect x=".5" y=".5" width="11" height="11" rx="1" /></svg></button>
            <button type="button" aria-label="Close"><svg width="12" height="12" viewBox="0 0 12 12" stroke="#000" className="block"><path d="M0 0l12 12M12 0L0 12" /></svg></button>
          </div>
        </header>
        <nav className="flex h-[27px] items-center gap-4 bg-[#fafafa] pl-[10px] pt-px text-[14px]">
          {menus.map((m) => (
            <button key={m} type="button">{m}</button>
          ))}
        </nav>
        <MainToolbar />
        <PropertyToolbar />
        <main className="flex flex-1">
          <ToolColumn />
          <Workspace />
          <aside className="flex w-[452px] shrink-0 flex-col font-['DejaVu_Sans_Condensed','Noto_Sans',sans-serif]">
            <div className="font-['Noto_Sans',sans-serif]"><DockHeader title="Cuts / Layers" /></div>
            <LayerTable />
            <LayerSettings />
            <div className="mt-[3px]">
              <Tabs
                tabs={[
                  { name: "Cuts / Layers", width: "w-[96px]" },
                  { name: "Move", width: "w-[54px]" },
                  { name: "Camera Control", width: "w-[105px]" },
                  { name: "Variable Text", width: "w-[91px]" },
                ]}
              />
            </div>
            <div className="mt-[5px] font-['Noto_Sans',sans-serif]"><DockHeader title="Laser" /></div>
            <LaserPanel />
            <Tabs tabs={[{ name: "Laser", width: "w-[57px]" }, { name: "Library", width: "w-[60px]" }]} />
          </aside>
        </main>
        <Palette />
        <footer className="flex h-[27px] items-center gap-3 pl-[2px] pt-1 font-['DejaVu_Sans_Condensed','Noto_Sans',sans-serif] text-[11px]">
          <span>x: 102.00, y: 374.00 mm</span>
          <span>Min (114.8x, 35.0y) to Max (430.0x, 271.4y)</span>
          <span className="-ml-1">1 objects</span>
          <span className="ml-2 h-5 w-px bg-[#dcdad5]" />
        </footer>
        <EditMenu />
      </div>
    </div>
  );
}
